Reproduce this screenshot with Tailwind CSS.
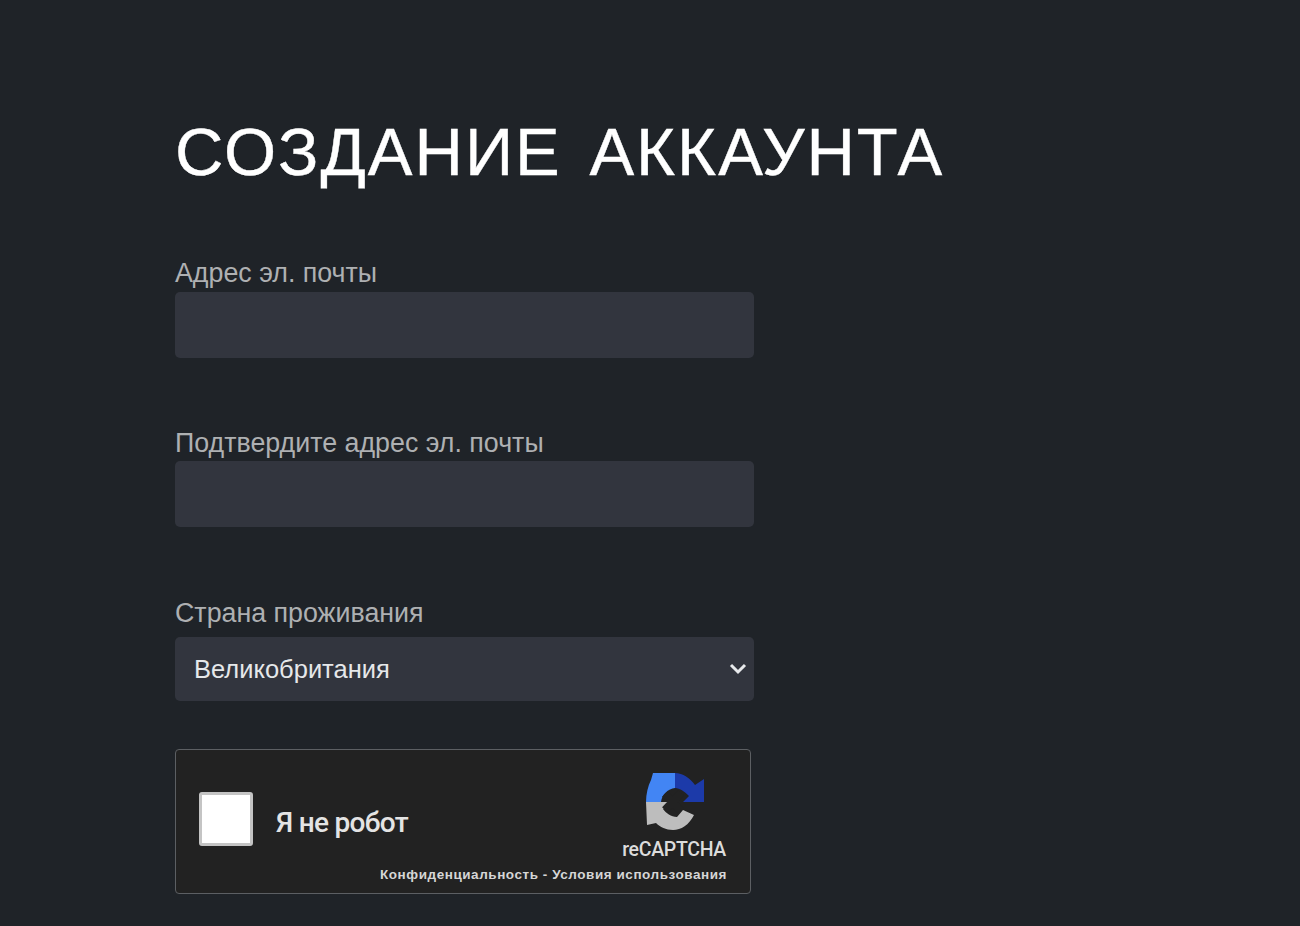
<!DOCTYPE html>
<html lang="ru">
 <head>
  <meta charset="utf-8"/>
  <meta content="width=device-width, initial-scale=1.0" name="viewport"/>
  <title>Создание аккаунта</title>
  <script src="https://cdn.jsdelivr.net/npm/@tailwindcss/browser@4"></script>
 </head>
 <body class="bg-[#1f2328] h-[926px] overflow-hidden font-['Liberation_Sans',Arial,sans-serif]">
  <main class="pl-[175px] pt-[114px] w-[1000px]">
   <h1 class="text-[67px] leading-[76px] font-normal tracking-[2px] [word-spacing:7px] [-webkit-text-stroke:0.4px_white] text-white whitespace-nowrap">СОЗДАНИЕ АККАУНТА</h1>

   <form class="mt-[66px] w-[579px]">
    <!-- email -->
    <label class="block text-[#aeb0b2] text-[26.8px] leading-[34px] h-[36px]">Адрес эл. почты</label>
    <input class="block w-full h-[66px] rounded-[5px] bg-[#32353e]" type="text"/>

    <label class="block mt-[67px] text-[#aeb0b2] text-[26.8px] leading-[36px] h-[36px]">Подтвердите адрес эл. почты</label>
    <input class="block w-full h-[66px] rounded-[5px] bg-[#32353e]" type="text"/>

    <!-- country -->
    <label class="block mt-[70px] text-[#aeb0b2] text-[26.8px] leading-[33px] h-[40px]">Страна проживания</label>
    <div class="relative">
     <select class="block w-full h-[64px] pl-[19px] rounded-[5px] bg-[#32353e] text-[#e6e8ea] text-[25.5px] appearance-none">
      <option>Великобритания</option>
     </select>
     <svg class="absolute right-[7px] top-[25px] w-[18px] h-[14px]" viewBox="0 0 18 14" fill="none" stroke="#e8eaec" stroke-width="3"><path d="M2 3l7 7 7-7"/></svg>
    </div>

    <!-- recaptcha -->
    <div class="relative mt-[48px] w-[576px] h-[145px] rounded-[4px] border border-[#5c5f63] bg-[#222222] flex items-center">
     <div class="ml-[23px] mb-[6px] w-[54px] h-[54px] rounded-[3px] bg-white border-[3px] border-[#c4c4c4]"></div>
     <span class="ml-[23px] mt-[2px] text-[#e4e4e4] text-[28px] font-medium font-['Roboto',sans-serif] tracking-[-0.7px]">Я не робот</span>
     <svg class="absolute left-[468px] top-[21px] w-[62px] h-[60px]" viewBox="0 0 62 60">
      <path fill="#4285f4" d="M2 31 C2 23 4 15 7 9 L9 2 L31 2 L31 17 C24 18 18 23 17 31Z"/>
      <path fill="#1c3aa9" d="M31 2 C39 2 46 7 51 14 L60 8 L60 31 L39 31 L45 25 C41 21 36 17 31 17Z"/>
      <path fill="#bdbdbd" d="M2 31 L28 31 L19 38 C22 42 27 46 33 46 L39 39 L50 44 C45 54 37 59 29 59 C22 59 16 56 12 52 L3 54Z"/>
      <path stroke="#222222" stroke-width="8" fill="none" d="M21 23L37 40M21 39L37 22"/>
     </svg>
     <span class="absolute right-[24px] top-[88px] text-[#dcdcdc] text-[19.5px] leading-[24px] font-['Roboto',sans-serif] font-medium tracking-[-0.3px]">reCAPTCHA</span>
     <span class="absolute right-[23px] top-[116px] text-[#d6d6d6] text-[13.5px] leading-[18px] font-bold tracking-[0.55px] whitespace-nowrap">Конфиденциальность - Условия использования</span>
    </div>
   </form>
  </main>
 </body>
</html>
